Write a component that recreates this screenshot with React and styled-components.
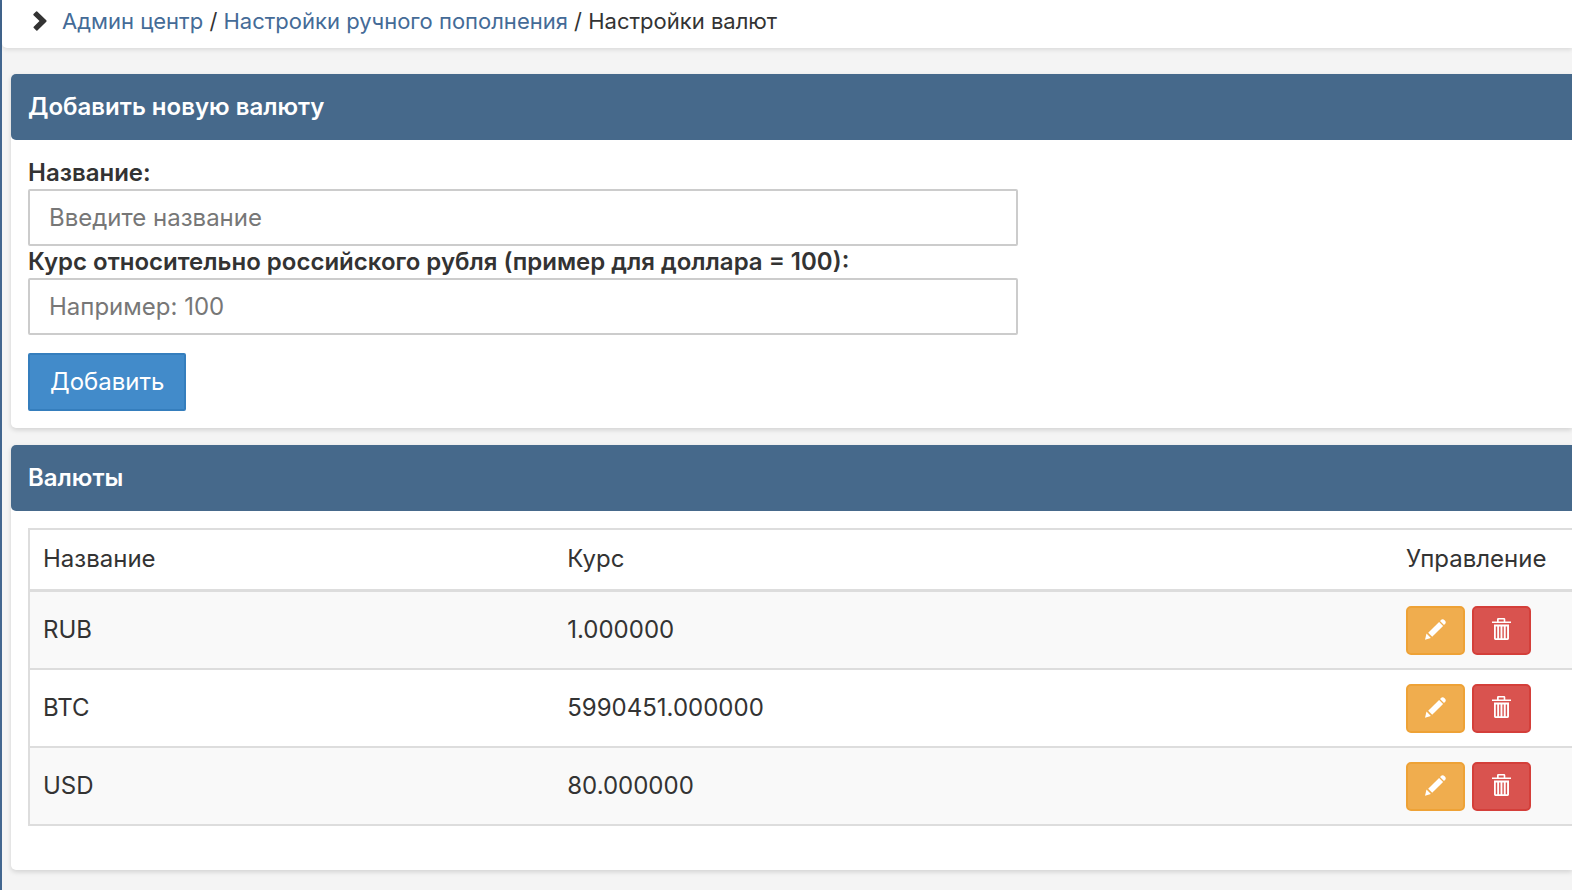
import React, { useState } from 'react';
import styled, { createGlobalStyle } from 'styled-components';

const CURRENCIES = [
  { name: 'RUB', rate: '1.000000' },
  { name: 'BTC', rate: '5990451.000000' },
  { name: 'USD', rate: '80.000000' },
];

const ChevronIcon = () => (
  <svg width="14" height="20" viewBox="0 0 14 20" fill="#333" aria-hidden="true">
    <path d="M3.1.4Q3.7 0 4.2.5L13.3 9.3Q14 10 13.3 10.7L4.4 19.4Q3.9 19.9 3.3 19.4L.6 16.8Q.2 16.3.7 15.8L6.5 10 .5 4.2Q0 3.7.5 3.1Z" />
  </svg>
);

const PencilIcon = () => (
  <svg width="21" height="21" viewBox="0 0 21 21" fill="#fff" aria-hidden="true">
    <path d="M0 20.8 1.5 14.6 5.9 19Z" />
    <path d="M3.2 13.8 14.1 2.9 18.1 6.9 7.2 17.8Z" />
    <path d="M15 2 16.6.6Q18-.4 19.6 1.2 21.4 3 20.4 4.4L19 6Z" />
  </svg>
);

const TrashIcon = () => (
  <svg width="19" height="22" viewBox="0 0 19 22" fill="#fff" aria-hidden="true">
    <path
      fillRule="evenodd"
      d="M5 3.5V1.3Q5 0 6.3 0H12Q13.3 0 13.3 1.3V3.5H19V5.1H0V3.5ZM6.7 3.5H11.7V1.6H6.7Z"
    />
    <path
      fillRule="evenodd"
      d="M2 6.6H17V20.6Q17 22 15.6 22H3.4Q2 22 2 20.6ZM3.8 8.4V20.3H5.2V8.4ZM7.1 8.4V20.3H8.5V8.4ZM10.4 8.4V20.3H11.8V8.4ZM13.7 8.4V20.3H15.1V8.4Z"
    />
  </svg>
);

const App = () => {
  const [currency, setCurrency] = useState({ name: '', rate: '' });
  const { name, rate } = currency;

  const onChangeHandler = e => {
    setCurrency({ ...currency, [e.target.name]: e.target.value });
  };

  return (
    <>
      <GlobalStyle />
      <Page>
        <Breadcrumbs>
          <ChevronIcon />
          <div>
            <CrumbLink href="#admin">Админ центр</CrumbLink> /{' '}
            <CrumbLink href="#manual">Настройки ручного пополнения</CrumbLink> /
            Настройки валют
          </div>
        </Breadcrumbs>
        <Main>
          <Panel>
            <PanelTitle>Добавить новую валюту</PanelTitle>
            <CurrencyForm onSubmit={e => e.preventDefault()}>
              <Label htmlFor="name">Название:</Label>
              <Input
                type="text"
                id="name"
                name="name"
                value={name}
                onChange={onChangeHandler}
                placeholder="Введите название"
              />
              <Label htmlFor="rate">
                Курс относительно российского рубля (пример для доллара = 100):
              </Label>
              <Input
                type="text"
                id="rate"
                name="rate"
                value={rate}
                onChange={onChangeHandler}
                placeholder="Например: 100"
              />
              <SubmitBtn type="submit">Добавить</SubmitBtn>
            </CurrencyForm>
          </Panel>
          <Panel>
            <PanelTitle>Валюты</PanelTitle>
            <TableWrap>
              <Table>
                <thead>
                  <tr>
                    <HeadCell $width="34%">Название</HeadCell>
                    <HeadCell>Курс</HeadCell>
                    <HeadCell $width="179px">Управление</HeadCell>
                  </tr>
                </thead>
                <tbody>
                  {CURRENCIES.map(item => (
                    <Row key={item.name}>
                      <Cell>{item.name}</Cell>
                      <Cell>{item.rate}</Cell>
                      <Cell>
                        <Actions>
                          <ActionBtn
                            type="button"
                            aria-label="Изменить"
                            $color="#f0ad4e"
                            $border="#eea236"
                          >
                            <PencilIcon />
                          </ActionBtn>
                          <ActionBtn
                            type="button"
                            aria-label="Удалить"
                            $color="#d9534f"
                            $border="#d43f3a"
                          >
                            <TrashIcon />
                          </ActionBtn>
                        </Actions>
                      </Cell>
                    </Row>
                  ))}
                </tbody>
              </Table>
            </TableWrap>
          </Panel>
        </Main>
      </Page>
    </>
  );
};

export default App;

const GlobalStyle = createGlobalStyle`
  * {
    box-sizing: border-box;
  }

  body {
    margin: 0;
    background-color: #f4f4f4;
    color: #333;
    font-family: Inter, 'Liberation Sans', sans-serif;
    font-size: 24px;
    line-height: 32px;
  }
`;

const Page = styled.div`
  min-height: 100vh;
  border-left: 2px solid #42668f;
`;

const Breadcrumbs = styled.nav`
  display: flex;
  align-items: center;
  gap: 15px;
  height: 48px;
  padding: 0 31px 6px;
  font-size: 22px;
  background-color: #fff;
  border-bottom-left-radius: 5px;
  box-shadow: 0 2px 4px rgba(0, 0, 0, 0.1);
`;

const CrumbLink = styled.a`
  color: #446b97;
  text-decoration: none;
`;

const Main = styled.main`
  display: flex;
  flex-direction: column;
  gap: 17px;
  padding: 26px 0 20px 9px;
`;

const Panel = styled.section`
  background-color: #fff;
  border-radius: 5px 0 0 5px;
  box-shadow: 0 2px 5px rgba(0, 0, 0, 0.14);
`;

const PanelTitle = styled.h2`
  margin: 0;
  padding: 17px;
  font-size: 24px;
  font-weight: 600;
  color: #fff;
  background-color: #46698b;
  border-radius: 5px 0 0 5px;
`;

const CurrencyForm = styled.form`
  display: flex;
  flex-direction: column;
  align-items: flex-start;
  padding: 17px;
`;

const Label = styled.label`
  font-weight: 600;
`;

const Input = styled.input`
  width: 100%;
  max-width: 990px;
  height: 57px;
  padding: 0 19px;
  font: inherit;
  color: #333;
  background-color: #fff;
  border: 2px solid #ccc;
  border-radius: 2px;

  &::placeholder {
    color: #777;
  }
`;

const SubmitBtn = styled.button`
  height: 58px;
  margin-top: 18px;
  padding: 0 20px;
  font: inherit;
  color: #fff;
  background-color: #428bca;
  border: 2px solid #357ebd;
  border-radius: 2px;
  cursor: pointer;
`;

const TableWrap = styled.div`
  padding: 17px 0 44px 17px;
`;

const Table = styled.table`
  width: 100%;
  table-layout: fixed;
  border: 2px solid #ddd;
  border-width: 2px 0 0 2px;
  border-spacing: 0;
`;

const HeadCell = styled.th`
  width: ${props => props.$width || 'auto'};
  height: 62px;
  padding: 0 13px 2px;
  font-weight: 400;
  text-align: left;
  border-bottom: 3px solid #ddd;
`;

const Row = styled.tr`
  &:nth-child(odd) {
    background-color: #f9f9f9;
  }
`;

const Cell = styled.td`
  height: 78px;
  padding: 0 13px;
  border-bottom: 2px solid #ddd;
`;

const Actions = styled.div`
  display: flex;
  gap: 7px;
`;

const ActionBtn = styled.button`
  display: flex;
  justify-content: center;
  align-items: center;
  width: 59px;
  height: 49px;
  padding: 0 0 2px;
  background-color: ${props => props.$color};
  border: 2px solid ${props => props.$border};
  border-radius: 5px;
  cursor: pointer;
`;
